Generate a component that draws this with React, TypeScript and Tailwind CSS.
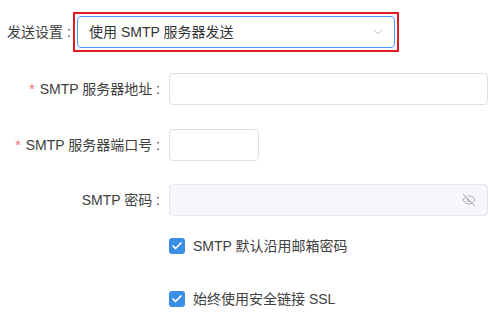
import { EyeOff, ChevronDown, Check } from "lucide-react";

const font = {
  fontFamily: '"Liberation Sans", "Noto Sans CJK SC", sans-serif',
};

function Field({
  label,
  required,
  children,
  className,
}: {
  label: string;
  required?: boolean;
  children: React.ReactNode;
  className?: string;
}) {
  return (
    <div className={`flex items-center ${className ?? ""}`}>
      <label className="w-[169px] shrink-0 pr-[9px] text-right text-[14px] leading-[32px] text-[#404040]">
        {required && <span className="mr-[5px] text-[#f56c6c]">*</span>}
        {label} :
      </label>
      {children}
    </div>
  );
}

function CheckRow({ text, className }: { text: string; className?: string }) {
  return (
    <div className={`flex items-center pl-[169px] ${className ?? ""}`}>
      <span className="flex h-[16px] w-[16px] items-center justify-center rounded-[3px] bg-[#3a8ee6]">
        <Check size={12} strokeWidth={3.5} className="text-white" />
      </span>
      <span className="ml-[8px] text-[14px] leading-[20px] text-[#404040]">{text}</span>
    </div>
  );
}

export default function App() {
  return (
    <div className="h-[318px] w-[504px] overflow-hidden bg-white" style={font}>
      <div className="flex items-center pl-[7px] pt-[12px]">
        <span className="w-[66px] text-[14px] leading-[32px] text-[#404040]">发送设置 :</span>
        <div className="border-2 border-[#e11b22] p-[2px]">
          <div className="flex h-[32px] w-[318px] items-center justify-between rounded-[4px] border border-[#409eff] pl-[11px] pr-[8px]">
            <span className="text-[14px] text-[#333]">使用 SMTP 服务器发送</span>
            <ChevronDown size={16} strokeWidth={1.5} className="text-[#c0c4cc]" />
          </div>
        </div>
      </div>

      <Field label="SMTP 服务器地址" required className="mt-[21px]">
        <div className="h-[32px] w-[319px] rounded-[4px] border border-[#dcdfe6]" />
      </Field>

      <Field label="SMTP 服务器端口号" required className="mt-[24px]">
        <div className="h-[32px] w-[90px] rounded-[4px] border border-[#dcdfe6]" />
      </Field>

      <Field label="SMTP 密码" className="mt-[23px]">
        <div className="flex h-[32px] w-[319px] items-center justify-end rounded-[4px] border border-[#e4e7ed] bg-[#f5f7fa] pr-[11px]">
          <EyeOff size={14} strokeWidth={1.5} className="text-[#9a9da4]" />
        </div>
      </Field>

      <CheckRow text="SMTP 默认沿用邮箱密码" className="mt-[20px]" />
      <CheckRow text="始终使用安全链接 SSL" className="mt-[33px]" />
    </div>
  );
}
